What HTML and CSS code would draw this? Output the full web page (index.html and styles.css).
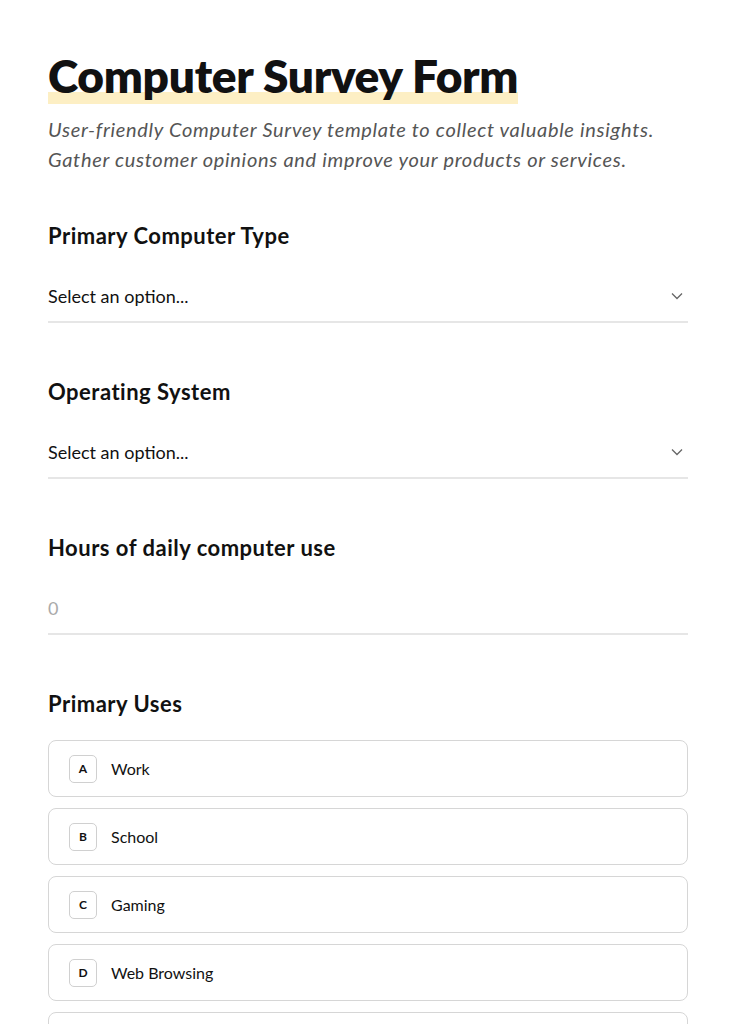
FILE: index.html
```html
<!DOCTYPE html>
<html>
<head>
  <meta charset="UTF-8" />
  <title>Computer Survey Form</title>
  <link rel="stylesheet" href="styles.css">
</head>
<body>
  <div class="form">
    <h1><span class="mark">Computer Survey Form</span></h1>
    <p class="intro">User-friendly Computer Survey template to collect valuable insights. Gather customer opinions and improve your products or services.</p>

    <div class="field first">
      <div class="label">Primary Computer Type</div>
      <div class="select">
        <span>Select an option...</span>
        <svg class="chev" width="14" height="14" viewBox="0 0 14 14"><path d="M2 4.5l5 5 5-5" fill="none" stroke="#666" stroke-width="1.3" /></svg>
      </div>
    </div>

    <div class="field">
      <div class="label">Operating System</div>
      <div class="select">
        <span>Select an option...</span>
        <svg class="chev" width="14" height="14" viewBox="0 0 14 14"><path d="M2 4.5l5 5 5-5" fill="none" stroke="#666" stroke-width="1.3" /></svg>
      </div>
    </div>

    <div class="field">
      <div class="label">Hours of daily computer use</div>
      <div class="select number">
        <span>0</span>
      </div>
    </div>

    <div class="field">
      <div class="label">Primary Uses</div>
      <div class="options">
        <div class="option"><span class="key">A</span>Work</div>
        <div class="option"><span class="key">B</span>School</div>
        <div class="option"><span class="key">C</span>Gaming</div>
        <div class="option"><span class="key">D</span>Web Browsing</div>
        <div class="option"><span class="key">E</span>Creative Work</div>
      </div>
    </div>
  </div>
</body>
</html>
```

FILE: styles.css
```css
body {
  margin: 0;
  background: #fff;
  color: #111;
  font-family: "Lato", "Noto Sans", sans-serif;
}
.form {
  padding: 48px 48px;
}
h1 {
  margin: 0;
  font-size: 46px;
  font-weight: 800;
  letter-spacing: -0.3px;
  line-height: 56px;
}
.mark {
  padding-bottom: 2px;
  background: linear-gradient(transparent 78%, #fdefc4 78%, #fdefc4 98%, transparent 98%);
}
.intro {
  margin: 10px 0 0;
  font-size: 20px;
  line-height: 30px;
  font-style: italic;
  color: #555;
  letter-spacing: 0.7px;
}
.field {
  margin-top: 54px;
}
.field.first {
  margin-top: 47px;
}
.label {
  font-size: 22px;
  font-weight: 700;
  letter-spacing: 0.5px;
  line-height: 30px;
}
.select {
  margin-top: 33px;
  display: flex;
  justify-content: space-between;
  align-items: center;
  font-size: 18px;
  line-height: 24px;
  padding-bottom: 13px;
  border-bottom: 2px solid #e6e6e6;
}
.chev {
  margin-right: 4px;
}
.number span {
  color: #aaa;
}
.options {
  margin-top: 21px;
  display: flex;
  flex-direction: column;
  gap: 11px;
}
.option {
  display: flex;
  align-items: center;
  gap: 14px;
  height: 55px;
  padding: 0 20px;
  border: 1px solid #d6d6d6;
  border-radius: 8px;
  font-size: 16px;
}
.key {
  width: 26px;
  height: 26px;
  border: 1px solid #d0d0d0;
  border-radius: 5px;
  display: flex;
  align-items: center;
  justify-content: center;
  font-size: 12px;
  font-weight: 700;
}
```
